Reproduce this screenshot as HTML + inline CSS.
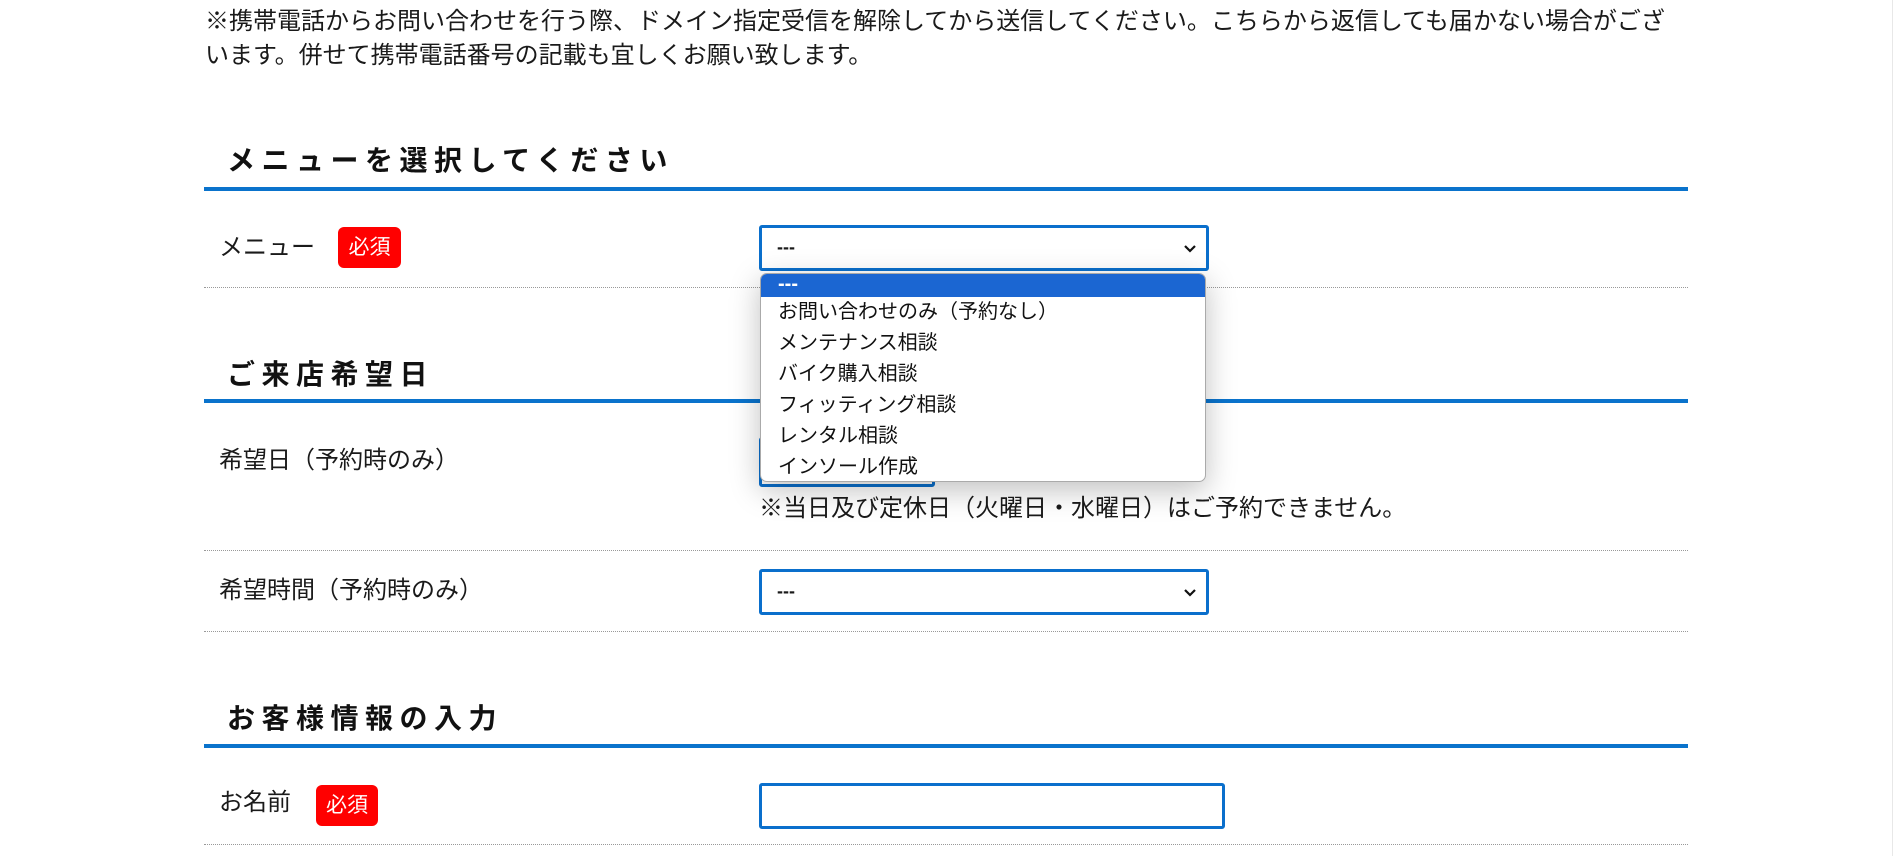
<!DOCTYPE html>
<html><head><meta charset="utf-8"><style>
*{margin:0;padding:0;box-sizing:border-box}
body{width:1896px;height:856px;background:#fff;position:relative;overflow:hidden;font-family:"Liberation Sans","Noto Sans CJK JP",sans-serif;color:#1a1a1a}
.a{position:absolute;white-space:nowrap}
.intro{left:205px;top:5px;width:1462px;font-size:24px;line-height:34px;white-space:normal}
.h{left:227px;font-size:28px;font-weight:bold;letter-spacing:6.5px;color:#111;line-height:34px}
.bl{position:absolute;left:204px;width:1484px;height:4px;background:#0a73cc}
.dl{position:absolute;left:204px;width:1484px;border-top:1px dotted #999}
.lab{font-size:24px;line-height:30px;color:#1a1a1a}
.req{position:absolute;background:#f00;color:#fff;border-radius:6px;font-size:21px;text-align:center;line-height:41px}
.sel{position:absolute;border:3px solid #0a6fcc;border-radius:3px;background:#fff;font-size:18px}
.sel span{position:absolute;left:15px;top:9px;font-weight:bold}
.sel svg{position:absolute;right:9px;top:16px}
.dd{position:absolute;left:760px;top:273px;width:446px;height:209px;background:#fff;border:1px solid #aaa;border-radius:7px;box-shadow:0 8px 30px rgba(0,0,0,.25);overflow:hidden;font-size:20px}
.dd div{height:31px;line-height:31px;padding-left:17px;color:#111}
.dd .hi{background:#1b66d2;color:#fff;height:23px;line-height:20px;font-weight:bold}
</style></head><body>
<div class="a intro">※携帯電話からお問い合わせを行う際、ドメイン指定受信を解除してから送信してください。こちらから返信しても届かない場合がございます。併せて携帯電話番号の記載も宜しくお願い致します。</div>

<div class="a h" style="top:144px">メニューを選択してください</div>
<div class="bl" style="top:187px"></div>
<div class="a lab" style="left:219px;top:233px">メニュー</div>
<div class="req" style="left:338px;top:227px;width:63px;height:41px">必須</div>
<div class="sel" style="left:759px;top:225px;width:450px;height:46px"><span>---</span><svg width="14" height="10" viewBox="0 0 14 10"><path d="M2 2l5 5 5-5" stroke="#111" stroke-width="2.2" fill="none"/></svg></div>
<div class="dl" style="top:287px"></div>

<div class="a h" style="top:358px">ご来店希望日</div>
<div class="bl" style="top:399px"></div>
<div class="a lab" style="left:219px;top:446px">希望日（予約時のみ）</div>
<div class="sel" style="left:759px;top:437px;width:176px;height:50px"></div>
<div class="a lab" style="left:759px;top:494px">※当日及び定休日（火曜日・水曜日）はご予約できません。</div>
<div class="dl" style="top:550px"></div>
<div class="a lab" style="left:219px;top:576px">希望時間（予約時のみ）</div>
<div class="sel" style="left:759px;top:569px;width:450px;height:46px"><span>---</span><svg width="14" height="10" viewBox="0 0 14 10"><path d="M2 2l5 5 5-5" stroke="#111" stroke-width="2.2" fill="none"/></svg></div>
<div class="dl" style="top:631px"></div>

<div class="a h" style="top:702px">お客様情報の入力</div>
<div class="bl" style="top:744px"></div>
<div class="a lab" style="left:219px;top:788px">お名前</div>
<div class="req" style="left:316px;top:785px;width:62px;height:41px">必須</div>
<div class="sel" style="left:759px;top:783px;width:466px;height:46px"></div>
<div class="dl" style="top:844px"></div>

<div class="dd">
<div class="hi">---</div>
<div>お問い合わせのみ（予約なし）</div>
<div>メンテナンス相談</div>
<div>バイク購入相談</div>
<div>フィッティング相談</div>
<div>レンタル相談</div>
<div>インソール作成</div>
</div>
<div style="position:absolute;left:1892px;top:0;width:1px;height:856px;background:#e8e8e8"></div>
</body></html>
